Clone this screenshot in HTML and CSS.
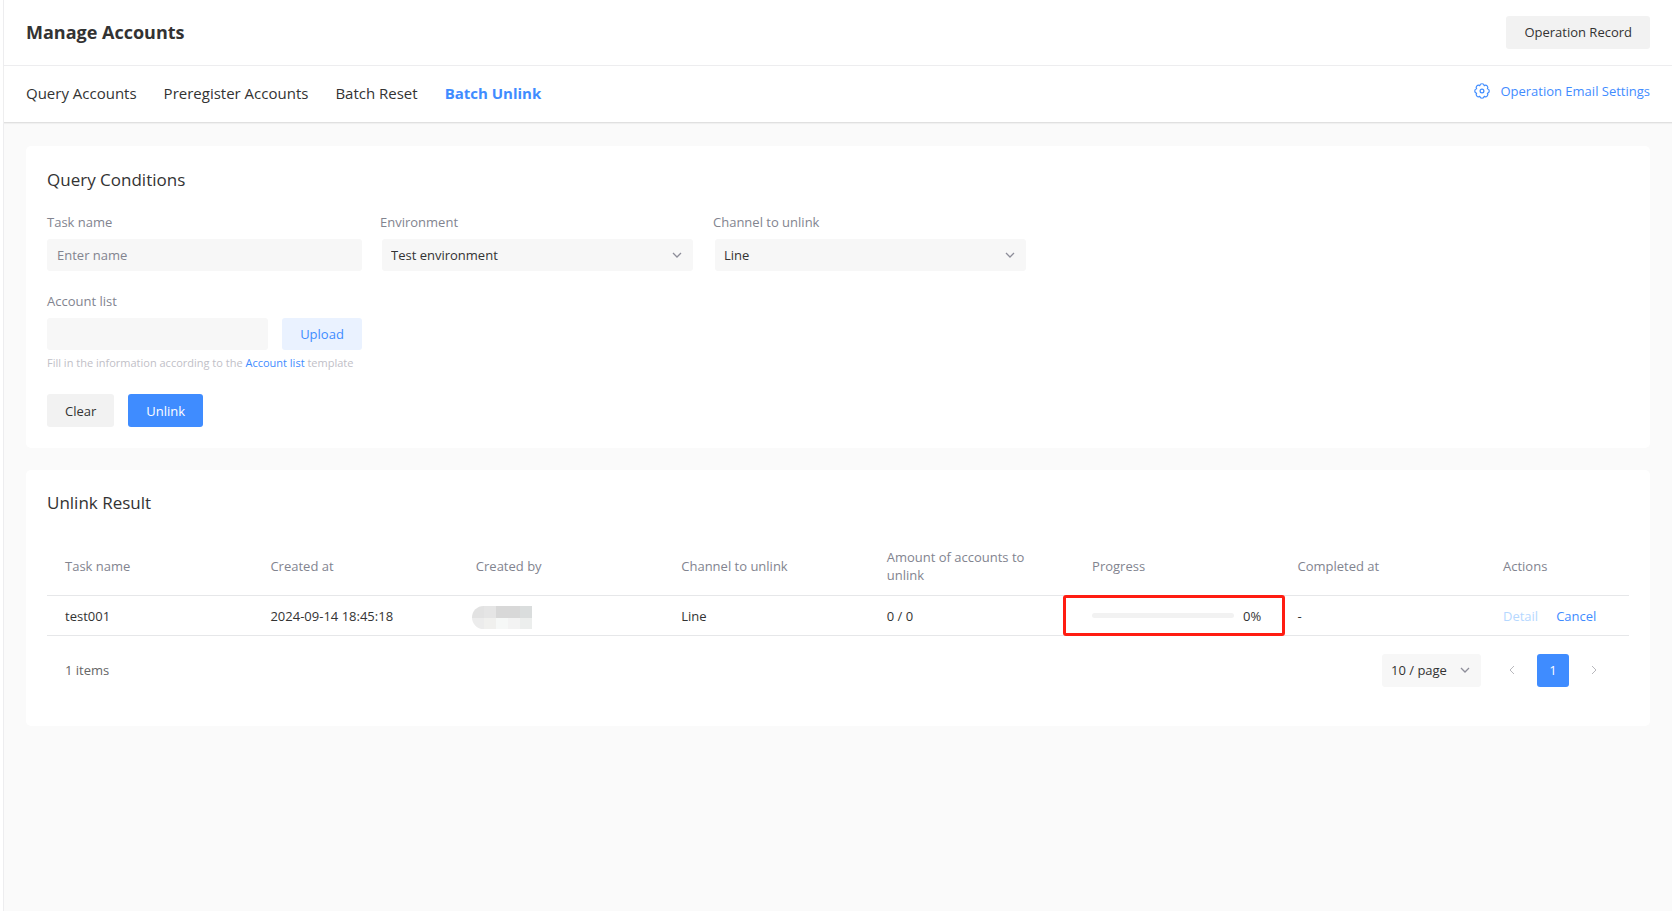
FILE: index.html
```html
<!DOCTYPE html>
<html lang="en">
<head>
<meta charset="utf-8">
<title>Manage Accounts</title>
<link rel="stylesheet" href="styles.css">
</head>
<body>
<div class="page">
  <header class="topbar">
    <h1 class="title">Manage Accounts</h1>
    <button class="btn btn-grey" type="button">Operation Record</button>
  </header>
  <nav class="tabs">
    <a class="tab" href="#query">Query Accounts</a>
    <a class="tab" href="#preregister">Preregister Accounts</a>
    <a class="tab" href="#reset">Batch Reset</a>
    <a class="tab active" href="#unlink" aria-current="page">Batch Unlink</a>
    <a class="settings" href="#settings">
      <svg class="gear" viewBox="0 0 16 16" aria-hidden="true"><path d="M5.78 2.64A2.25 2.25 0 0 1 10.22 2.64A2.25 2.25 0 0 1 13.36 5.78A2.25 2.25 0 0 1 13.36 10.22A2.25 2.25 0 0 1 10.22 13.36A2.25 2.25 0 0 1 5.78 13.36A2.25 2.25 0 0 1 2.64 10.22A2.25 2.25 0 0 1 2.64 5.78A2.25 2.25 0 0 1 5.78 2.64Z"/><circle cx="8" cy="8" r="1.9"/></svg>
      Operation Email Settings
    </a>
  </nav>
  <main class="content">
    <section class="card">
      <h2 class="card-title">Query Conditions</h2>
      <form class="form">
        <div class="field">
          <label class="label" for="task">Task name</label>
          <input class="input" id="task" type="text" placeholder="Enter name">
        </div>
        <div class="field">
          <label class="label" for="env">Environment</label>
          <div class="select-box">
            <select class="select" id="env"><option>Test environment</option></select>
            <svg class="chevron" viewBox="0 0 10 10" aria-hidden="true"><path d="M1 3l4 4 4-4"/></svg>
          </div>
        </div>
        <div class="field">
          <label class="label" for="channel">Channel to unlink</label>
          <div class="select-box">
            <select class="select" id="channel"><option>Line</option></select>
            <svg class="chevron" viewBox="0 0 10 10" aria-hidden="true"><path d="M1 3l4 4 4-4"/></svg>
          </div>
        </div>
        <div class="field field-list">
          <label class="label" for="list">Account list</label>
          <div class="upload-row">
            <input class="input" id="list" type="text" readonly>
            <button class="btn btn-light" type="button">Upload</button>
          </div>
          <p class="hint">Fill in the information according to the <a class="link" href="#template">Account list</a> template</p>
        </div>
        <div class="form-actions">
          <button class="btn btn-grey" type="reset">Clear</button>
          <button class="btn btn-primary" type="button">Unlink</button>
        </div>
      </form>
    </section>
    <section class="card card-result">
      <h2 class="card-title">Unlink Result</h2>
      <table class="table">
        <thead>
          <tr><th>Task name</th><th>Created at</th><th>Created by</th><th>Channel to unlink</th><th>Amount of accounts to unlink</th><th>Progress</th><th>Completed at</th><th class="col-actions">Actions</th></tr>
        </thead>
        <tbody>
          <tr>
            <td>test001</td>
            <td>2024-09-14 18:45:18</td>
            <td>
              <div class="masked">
                <i class="m1"></i><i class="m2"></i><i class="m3"></i><i class="m3"></i><i class="m4"></i>
                <i class="m5"></i><i class="m6"></i><i class="m7"></i><i class="m8"></i><i class="m9"></i>
              </div>
            </td>
            <td>Line</td>
            <td>0 / 0</td>
            <td class="marked"><div class="progress"><progress class="bar" max="100" value="0" aria-label="Progress"></progress><span>0%</span></div></td>
            <td>-</td>
            <td><div class="row-actions"><a class="link disabled" href="#detail">Detail</a><a class="link" href="#cancel">Cancel</a></div></td>
          </tr>
        </tbody>
      </table>
      <footer class="pager">
        <span class="total">1 items</span>
        <div class="size-box">
          <select class="select" aria-label="Page size"><option>10 / page</option></select>
          <svg class="chevron" viewBox="0 0 10 10" aria-hidden="true"><path d="M1 3l4 4 4-4"/></svg>
        </div>
        <div class="pages">
          <button class="arrow" type="button" aria-label="Previous page"><svg viewBox="0 0 10 10"><path d="M7 1L3 5l4 4"/></svg></button>
          <button class="current" type="button">1</button>
          <button class="arrow" type="button" aria-label="Next page"><svg viewBox="0 0 10 10"><path d="M3 1l4 4-4 4"/></svg></button>
        </div>
      </footer>
    </section>
  </main>
</div>
</body>
</html>
```
FILE: styles.css
```css
* { box-sizing: border-box; }
body {
  margin: 0;
  background: #fff;
  color: #333;
  font: 13px/18px "Open Sans", "Noto Sans", sans-serif;
}
input, select, button { font: inherit; color: inherit; border: 0; margin: 0; }
h1, h2, p { margin: 0; }
a { text-decoration: none; color: inherit; }
svg { fill: none; stroke: currentColor; }

.page {
  margin-left: 3px;
  min-height: 100vh;
  border-left: 1px solid #ededef;
  background: #fafafa;
}
.topbar {
  display: flex;
  justify-content: space-between;
  align-items: center;
  height: 66px;
  padding: 0 22px 1px;
  background: #fff;
  border-bottom: 1px solid #ededef;
}
.title { font-size: 18px; line-height: 24px; font-weight: 700; }
.tabs {
  display: flex;
  align-items: center;
  gap: 27px;
  height: 57px;
  padding: 0 22px 2px;
  background: #fff;
  border-bottom: 1px solid #e0e0e0;
  box-shadow: 0 1px 1px #f0f0f0;
}
.tab { font-size: 15px; line-height: 20px; }
.tab.active { color: #3f8cff; font-weight: 700; }
.settings {
  display: flex;
  align-items: center;
  gap: 10px;
  margin-left: auto;
  padding-bottom: 4px;
  color: #3f8cff;
}
.gear { width: 16px; height: 16px; stroke-width: 1.2; stroke-linejoin: round; }

.btn { height: 33px; padding: 0 18px; border-radius: 3px; }
.btn-grey { background: #f2f2f2; }
.btn-light { background: #eaf2ff; color: #3f8cff; }
.btn-primary { background: #3f8cff; color: #fff; }
.link { color: #3f8cff; }
.disabled { color: #b5d8ff; }

.content { display: grid; gap: 22px; padding: 23px 22px; }
.card { background: #fff; border-radius: 5px; padding: 22px 21px 21px; }
.card-result { padding-top: 21px; }
.card-title { font-size: 17px; line-height: 24px; font-weight: 400; }

.form { display: grid; grid-template-columns: repeat(3, 315px); gap: 21px 18px; margin-top: 21px; }
.label { display: block; margin-bottom: 8px; color: #82848f; }
.input, .select { width: 100%; height: 32px; padding: 0 10px; background: #f7f7f7; border-radius: 3px; }
.input::placeholder { color: #82848f; opacity: 1; }
.select { appearance: none; padding: 0 9px; }
.select-box, .size-box { position: relative; }
.select-box { margin: 0 2px; }
.chevron {
  position: absolute;
  top: 50%;
  right: 11px;
  width: 10px;
  height: 10px;
  margin-top: -5px;
  color: #8d8d99;
  stroke-width: 1.3;
  pointer-events: none;
}
.field-list { grid-column: 1; }
.upload-row { display: grid; grid-template-columns: 1fr 80px; gap: 14px; }
.upload-row .btn { height: 32px; }
.hint { margin: 4px 0 1px; font-size: 11px; color: #bfc0c7; white-space: nowrap; }
.form-actions { grid-column: 1 / -1; display: flex; gap: 14px; }

.table { width: 100%; margin-top: 23px; table-layout: fixed; border-collapse: collapse; }
.table th, .table td { padding: 0 18px; text-align: left; border-bottom: 1px solid #e6e7e9; }
.table th { height: 57px; color: #82848f; font-weight: 400; }
.table th.col-actions { width: 144px; }
.table td { height: 40px; padding-top: 1px; }
.masked {
  display: grid;
  grid-template-columns: repeat(5, 12px);
  grid-auto-rows: 12px;
  width: 60px;
  height: 23px;
  margin: 4px 0 0 -4px;
  border-radius: 12px 0 0 12px;
  overflow: hidden;
}
.m1 { background: #e2e2e2; }
.m2 { background: #e5e5e5; }
.m3 { background: #d8d8d8; }
.m4 { background: #dadddd; }
.m5 { background: #ececec; }
.m6 { background: #f0f0ee; }
.m7 { background: #f6f8f7; }
.m8 { background: #f3f3f3; }
.m9 { background: #eceeed; }
.marked { position: relative; }
.marked::after {
  content: "";
  position: absolute;
  inset: -1px -5px -1px -11px;
  border: 3px solid #ff1d12;
  border-radius: 3px;
  pointer-events: none;
}
.progress { display: flex; align-items: center; gap: 9px; }
.bar { appearance: none; width: 142px; height: 5px; border: 0; border-radius: 3px; overflow: hidden; }
.bar::-webkit-progress-bar { background: #f2f2f2; }
.bar::-webkit-progress-value { background: #3f8cff; }
.row-actions { display: flex; gap: 18px; white-space: nowrap; }

.pager { display: flex; align-items: center; padding: 18px 19px 18px 18px; }
.total { margin-right: auto; color: #666; }
.size-box { width: 99px; }
.size-box .select { height: 33px; }
.pages { display: flex; margin-left: 15px; gap: 9px; }
.arrow, .current { width: 32px; height: 33px; padding: 0; border-radius: 3px; }
.arrow { background: none; color: #b8b8bd; }
.arrow svg { width: 10px; height: 10px; }
.current { background: #3f8cff; color: #fff; }
```
